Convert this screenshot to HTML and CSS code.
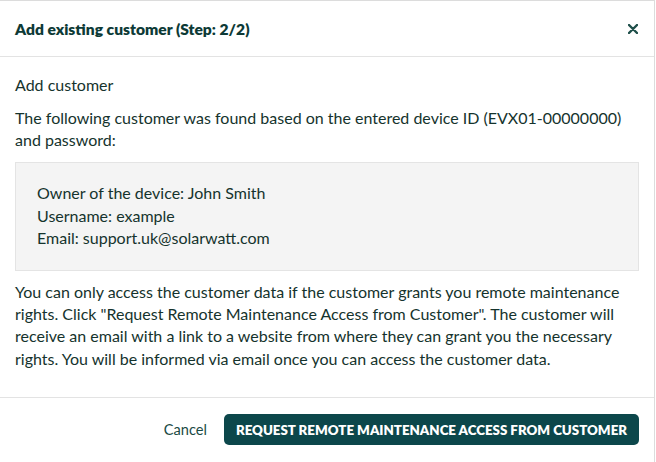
FILE: index.html
```html
<!DOCTYPE html>
<html lang="en">
<head>
  <meta charset="UTF-8" />
  <meta name="viewport" content="width=device-width, initial-scale=1.0"/>
  <title>Add existing customer</title>
  <link rel="stylesheet" href="styles.css">
</head>
<body>
  <div class="modal">
    <div class="modal-header">
      <h2>Add existing customer (Step: 2/2)</h2>
      <button type="button" class="close-btn" aria-label="Close">
        <svg width="10" height="10" viewBox="0 0 10 10"><path d="M1 1L9 9M9 1L1 9" stroke="#1f4f4a" stroke-width="2.4" stroke-linecap="round"/></svg>
      </button>
    </div>
    <div class="modal-body">
      <p class="subtitle">Add customer</p>
      <p>The following customer was found based on the entered device ID (EVX01-00000000) and password:</p>
      <div class="customer-box">
        Owner of the device: John Smith<br>
        Username: example<br>
        Email: support.uk@solarwatt.com
      </div>
      <p class="info">You can only access the customer data if the customer grants you remote maintenance rights. Click "Request Remote Maintenance Access from Customer". The customer will receive an email with a link to a website from where they can grant you the necessary rights. You will be informed via email once you can access the customer data.</p>
    </div>
    <div class="modal-footer">
      <button type="button" class="btn-cancel">Cancel</button>
      <button type="button" class="btn-primary">Request remote maintenance access from customer</button>
    </div>
  </div>
</body>
</html>
```

FILE: styles.css
```css
* {
  box-sizing: border-box;
}
body {
  font-family: Lato, "Open Sans", sans-serif;
  background: white;
  margin: 0;
  color: #15332d;
}
.modal {
  width: 655px;
  height: 462px;
  background: white;
  border-top: 1px solid #dcdcdc;
  border-right: 1px solid #dcdcdc;
}
.modal-header {
  display: flex;
  align-items: center;
  justify-content: space-between;
  height: 56px;
  padding: 0 15px;
  border-bottom: 1px solid #e3e3e3;
}
.modal-header h2 {
  margin: 0;
  font-size: 15.6px;
  font-weight: 800;
  color: #0d3a36;
}
.close-btn {
  border: none;
  background: none;
  padding: 0;
  margin-right: 1px;
  cursor: pointer;
  display: flex;
}
.modal-body {
  padding: 17px 15px 25px;
  height: 340px;
  font-size: 16px;
  line-height: 22px;
}
.modal-body p {
  margin: 0 0 11px;
}
.customer-box {
  background: #f4f4f4;
  border: 1px solid #e4e4e4;
  padding: 19px 21px 20px;
  line-height: 22.5px;
  margin-bottom: 10px;
}
.modal-body .info {
  margin: 0;
  line-height: 22.4px;
}
.modal-footer {
  display: flex;
  justify-content: flex-end;
  align-items: center;
  gap: 17px;
  padding: 16px 15px;
  border-top: 1px solid #e3e3e3;
}
.btn-cancel {
  border: none;
  background: none;
  font-family: inherit;
  font-size: 14.6px;
  color: #1a4a44;
  cursor: pointer;
  padding: 0;
}
.btn-primary {
  border: none;
  background: #0c474b;
  color: white;
  font-family: inherit;
  font-size: 13.3px;
  font-weight: 800;
  text-transform: uppercase;
  height: 31px;
  padding: 0 12px;
  border-radius: 5px;
  cursor: pointer;
}
```
